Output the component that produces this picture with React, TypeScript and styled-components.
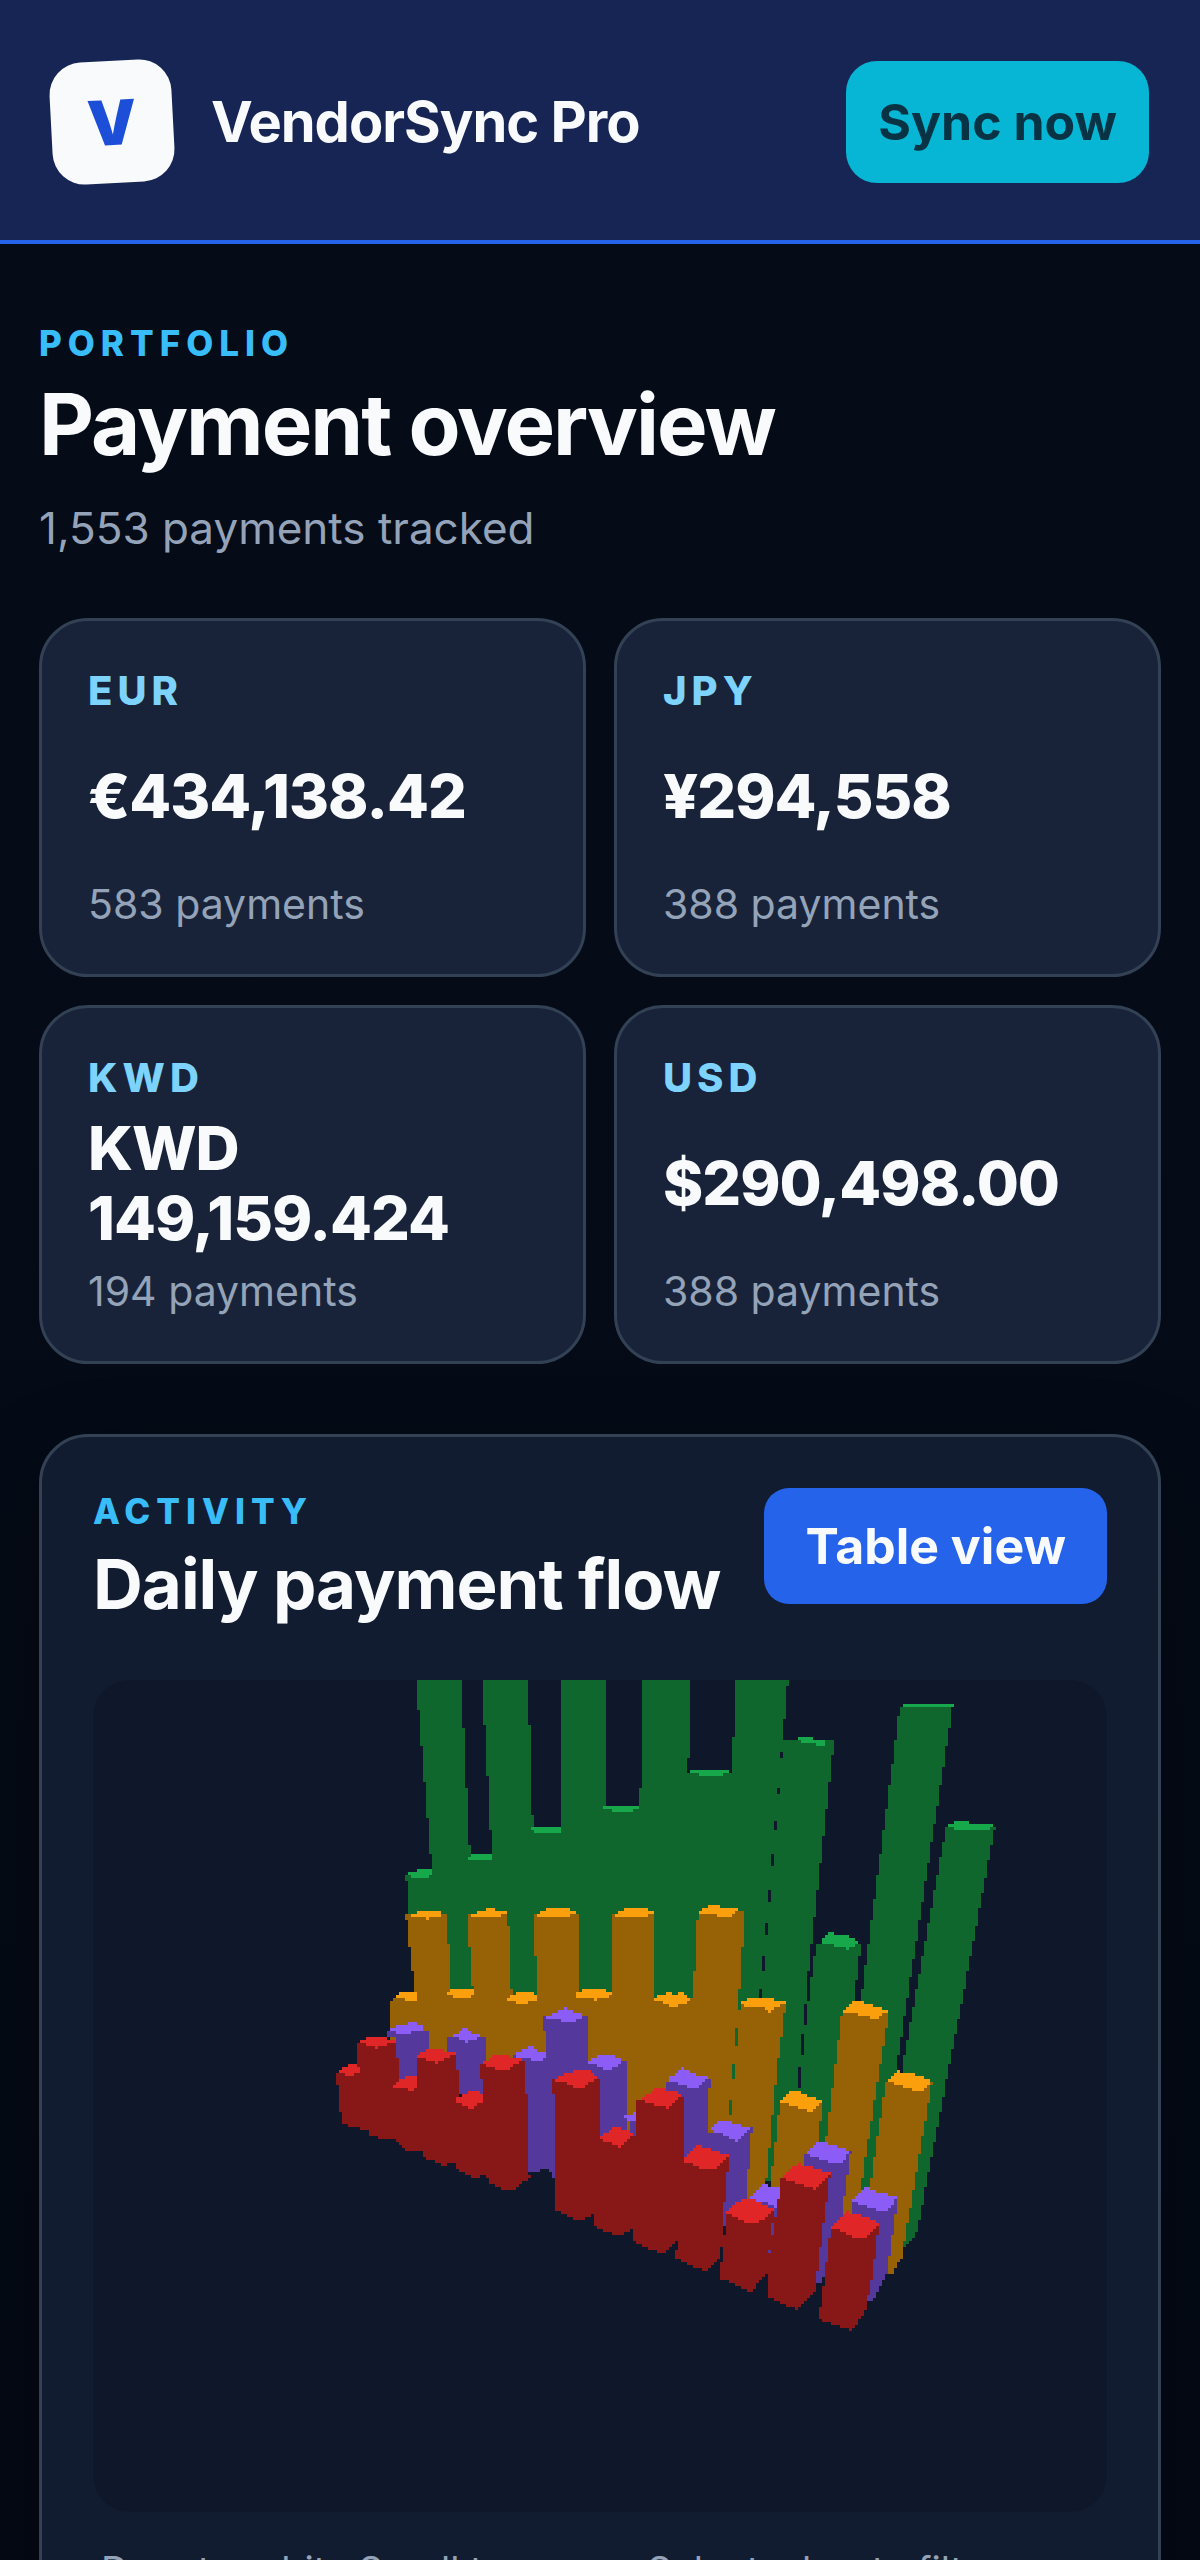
import React, { useMemo } from 'react';
import styled, { createGlobalStyle } from 'styled-components';

/** Types */
interface ICurrencyTotal {
	code: string;
	amount: string;
	payments: number;
}

interface IBarSeries {
	id: string;
	side: string;
	top: string;
	sides: string[];
	caps: string[];
}

/** Data */
const totals: ICurrencyTotal[] = [
	{ code: 'EUR', amount: '€434,138.42', payments: 583 },
	{ code: 'JPY', amount: '¥294,558', payments: 388 },
	{ code: 'KWD', amount: 'KWD 149,159.424', payments: 194 },
	{ code: 'USD', amount: '$290,498.00', payments: 388 },
];

// projected bar faces, back row first
const series: IBarSeries[] = [
	{
		id: 'green',
		side: '#10672e',
		top: '#18a84c',
		sides: [
			'313,194 339,192 323,0 368,0 377,176 399,176 389,0 435,0 440,150 467,150 467,0 512,0 512,128 547,128 550,0 598,0 595,93 639,93 643,0 695,0 656,440 323,340',
			'690,61 741,61 716,287 704,412 690,500 650,500 658,440',
			'723,264 768,264 761,320 729,480 700,480 706,412 713,340',
			'807,26 860,25 811,340 803,390 780,520 742,520 768,320',
			'853,147 902,147 873,300 825,547 822,555 811,569 790,560 809,390 818,340',
		],
		caps: [
			'313,195 326,189 339,189 339,195 330,199',
			'374,178 379,173 399,173 399,179 374,180',
			'438,148 467,148 467,152 456,154 447,154 438,151',
			'511,125 547,125 547,128 534,132 524,132 511,129',
			'597,90 637,90 637,93 623,96 614,96 597,93',
			'703,58 719,58 733,62 733,65 710,64',
			'726,262 737,253 758,257 767,262 754,269 743,266',
			'809,23 860,23 860,27 809,27',
			'853,146 862,142 876,142 880,145 902,145 895,151 868,151',
		],
	},
	{
		id: 'amber',
		side: '#976106',
		top: '#fba00c',
		sides: [
			'297,320 322,314 313,235 354,235 358,314 380,314 374,235 415,235 419,318 444,318 441,235 485,235 486,316 518,316 518,235 562,235 560,318 600,318 605,232 652,232 646,316 631,500 297,365',
			'647,324 693,323 684,388 671,525 650,525 632,500',
			'687,423 729,421 726,460 715,520 675,520 678,500',
			'749,332 796,331 779,437 768,507 758,550 715,550 733,460',
			'793,401 839,402 814,547 809,577 800,593 792,593 760,590 777,507',
		],
		caps: [
			'313,238 326,231 347,231 350,235 340,237 333,240 330,237',
			'378,235 388,231 395,228 400,228 405,231 416,231 411,234 402,237 379,237',
			'441,235 452,230 457,227 473,227 480,232 485,232 473,237 454,237',
			'518,235 530,230 536,227 553,227 558,232 562,232 550,237 533,237',
			'605,234 611,228 624,224 631,228 648,227 643,233 635,237 626,237 620,234',
			'298,319 308,312 323,311 323,320',
			'354,311 366,308 380,308 380,315 369,320 354,315',
			'412,319 424,313 435,311 444,315 444,319 435,323 425,323',
			'479,316 490,309 506,308 518,312 518,316 503,320',
			'559,318 572,314 576,310 581,314 590,313 598,319 592,323 584,326 576,326',
			'645,325 656,318 679,318 684,321 694,322 684,327 676,332 672,328',
			'687,422 697,412 701,410 712,415 729,421 717,432',
			'749,331 760,321 771,321 773,324 796,330 786,336 782,340 773,336',
			'793,401 806,391 824,395 840,402 828,413',
		],
	},
	{
		id: 'violet',
		side: '#54389b',
		top: '#8b5cf6',
		sides: [
			'294,351 335,351 335,400 306,400 303,356 294,356',
			'353,356 393,356 393,415 357,415',
			'419,375 454,375 454,487 444,493 432,490',
			'451,337 495,337 495,500 463,500 453,487 453,350 451,350',
			'493,382 533,381 533,460 497,460',
			'538,439 560,439 560,460 538,460',
			'573,401 617,399 613,470 605,500 578,500',
			'614,452 659,448 652,530 634,548 610,520',
			'655,518 690,512 676,583 672,583 660,540',
			'710,474 758,471 745,560 729,602 722,602 712,490',
			'758,521 805,518 794,593 779,622 774,622 758,530',
		],
		caps: [
			'296,350 308,345 316,343 324,343 332,349 320,352 312,356 304,353',
			'353,358 364,353 372,347 380,353 392,353 384,358 374,362 366,358',
			'419,376 430,370 438,366 446,371 454,373 454,377 446,381 430,378',
			'452,338 464,333 473,327 484,334 494,335 484,340 473,343 464,339',
			'493,383 503,377 512,375 520,376 531,381 523,386 514,391 505,386',
			'531,437 538,434 544,429 544,441 535,441',
			'573,400 584,392 590,388 600,394 617,398 607,405 600,410 590,405',
			'616,450 626,440 635,440 645,445 659,447 650,455 643,462 633,456',
			'655,518 663,510 672,503 678,507 687,508 684,528 676,524',
			'711,474 722,465 728,461 738,465 758,471 747,484 735,482',
			'758,521 768,511 774,507 785,512 805,517 794,532 782,529',
		],
	},
	{
		id: 'red',
		side: '#871817',
		top: '#e02626',
		sides: [
			'243,393 265,386 265,363 303,361 307,403 325,403 323,377 363,375 367,418 390,418 387,383 431,381 434,420 434,493 438,497 417,512 397,503 393,493 385,499 364,490 361,481 353,486 332,478 329,470 313,471 304,463 301,458 294,461 276,454 274,449 261,448 249,443 246,420',
			'460,400 508,398 508,457 543,457 543,420 591,416 591,480 636,477 630,537 628,577 613,592 583,578 584,561 571,573 566,573 541,562 541,546 528,557 502,547 501,532 489,542 463,530 463,417 460,415',
			'634,533 681,530 674,593 658,612 627,598 629,577',
			'688,497 737,494 722,610 704,630 674,617 675,580 684,530',
			'738,548 786,544 780,590 773,630 760,650 756,650 726,639',
		],
		caps: [
			'244,393 251,387 262,382 264,386 268,386 268,391 258,397 248,392',
			'265,363 275,357 280,356 292,356 296,359 303,361 292,365 284,368 274,365',
			'297,406 306,401 312,398 318,394 320,397 325,397 325,408 318,410 311,408',
			'323,377 332,371 340,369 350,369 355,373 363,373 355,378 343,383 333,379',
			'361,420 370,414 377,411 385,411 389,415 389,422 378,429 368,424',
			'388,384 396,379 403,375 415,375 420,378 430,380 422,384 414,390 405,390',
			'461,400 472,394 480,391 496,391 505,398 495,404 487,409 478,405',
			'505,459 514,452 523,446 533,450 543,453 534,461 527,467 517,463',
			'545,420 555,414 564,407 574,410 591,414 582,422 574,428 560,424',
			'588,480 598,471 605,465 617,469 636,475 627,484 620,490 612,490',
			'633,533 642,524 650,519 660,519 681,529 672,538 664,544 655,544',
			'688,498 698,489 706,484 718,487 737,493 728,503 722,509 712,506',
			'738,547 746,538 754,532 765,534 786,543 778,553 772,560 762,558',
		],
	},
];

const CELL = 3;

// fill a polygon with square cells, one run per scan line
const toCells = (points: string) => {
	const pts = points.split(' ').map(p => p.split(',').map(Number));
	const ys = pts.map(p => p[1]);
	const first = Math.floor(Math.min(...ys) / CELL);
	const last = Math.ceil(Math.max(...ys) / CELL);
	let d = '';

	for (let row = first; row < last; row++) {
		const y = (row + 0.5) * CELL;
		const hits: number[] = [];
		pts.forEach(([x1, y1], i) => {
			const [x2, y2] = pts[(i + 1) % pts.length];
			if (y1 <= y !== y2 <= y) {
				hits.push(x1 + ((y - y1) * (x2 - x1)) / (y2 - y1));
			}
		});
		hits.sort((a, b) => a - b);

		for (let i = 0; i + 1 < hits.length; i += 2) {
			const from = Math.round(hits[i] / CELL) * CELL;
			const to = Math.round(hits[i + 1] / CELL) * CELL;
			if (to > from) d += `M${from} ${row * CELL}h${to - from}v${CELL}h${from - to}z`;
		}
	}
	return d;
};

/** style */
const GlobalStyle = createGlobalStyle`
	* {
		box-sizing: border-box;
	}
	body {
		margin: 0;
		background: #050c18;
		color: #f8fafc;
		font-family: Inter, 'Liberation Sans', sans-serif;
	}
	h1, h2, p {
		margin: 0;
	}
	button {
		border: 0;
		font-family: inherit;
		cursor: pointer;
	}
`;

const Header = styled.header`
	display: flex;
	align-items: center;
	justify-content: space-between;
	padding: 61px 51px 57px;
	background: #172554;
	border-bottom: 4px solid #2563eb;
`;

const Brand = styled.div`
	display: flex;
	align-items: center;
	gap: 38px;
`;

const LogoTile = styled.span`
	display: grid;
	place-items: center;
	width: 122px;
	height: 122px;
	border-radius: 32px;
	background: #f8fafc;
	color: #1d4ed8;
	font-size: 62px;
	font-weight: 900;
	transform: rotate(-3deg);
`;

const BrandName = styled.span`
	font-size: 56px;
	font-weight: 700;
	letter-spacing: -1px;
`;

const Button = styled.button<{ $tone: 'cyan' | 'blue' }>`
	flex: none;
	height: ${p => (p.$tone === 'cyan' ? 122 : 116)}px;
	padding: 0 ${p => (p.$tone === 'cyan' ? 32 : 41)}px;
	border-radius: ${p => (p.$tone === 'cyan' ? 31 : 25)}px;
	background: ${p => (p.$tone === 'cyan' ? '#06b6d4' : '#2563eb')};
	color: ${p => (p.$tone === 'cyan' ? '#083344' : '#f8fafc')};
	font-size: 50px;
	font-weight: 700;
`;

const Main = styled.main`
	padding: 76px 39px 40px;
	background: linear-gradient(#050c18, #040914);
`;

const Eyebrow = styled.p`
	color: #38bdf8;
	font-size: 35px;
	font-weight: 800;
	line-height: 46px;
	letter-spacing: 6px;
`;

const Title = styled.h1`
	font-size: 85px;
	font-weight: 700;
	line-height: 118px;
	letter-spacing: -2px;
`;

const Subtitle = styled.p`
	margin-top: 12px;
	color: #94a3b8;
	font-size: 44px;
	line-height: 64px;
`;

const TotalsGrid = styled.section`
	display: grid;
	grid-template-columns: 1fr 1fr;
	gap: 28px;
	margin-top: 58px;
`;

const TotalCard = styled.article`
	display: flex;
	flex-direction: column;
	justify-content: space-between;
	min-height: 359px;
	padding: 48px 46px 44px;
	border: 3px solid #334155;
	border-radius: 49px;
	background: #18233a;
`;

const CurrencyCode = styled.span`
	color: #7dd3fc;
	font-size: 40px;
	font-weight: 800;
	line-height: 44px;
	letter-spacing: 5px;
`;

const Amount = styled.strong`
	font-size: 61px;
	font-weight: 800;
	line-height: 70px;
	letter-spacing: -1px;
`;

const PaymentCount = styled.span`
	color: #94a3b8;
	font-size: 41px;
	line-height: 52px;
`;

const Panel = styled.section`
	margin-top: 70px;
	padding: 51px;
	border: 3px solid #334155;
	border-radius: 49px;
	background: #111c30;
	box-shadow: 0 36px 90px rgba(0, 0, 0, 0.3);
`;

const PanelHead = styled.div`
	display: flex;
	align-items: flex-start;
	justify-content: space-between;
	gap: 24px;
`;

const PanelTitle = styled.h2`
	font-size: 69px;
	font-weight: 700;
	line-height: 100px;
	letter-spacing: -1px;
	white-space: nowrap;
`;

const ChartFrame = styled.div`
	margin-top: 46px;
	overflow: hidden;
	border-radius: 37px;
	background: #0f172a;

	svg {
		display: block;
		width: 100%;
		height: auto;
	}
`;

const Hint = styled.p`
	margin-top: 30px;
	padding: 0 8px;
	color: #94a3b8;
	font-size: 38px;
	line-height: 56px;
`;

/** Component: 3D bar chart */
const FlowChart: React.FC = () => {
	const layers = useMemo(
		() =>
			series.map(item => ({
				...item,
				sidePath: item.sides.map(toCells).join(''),
				capPath: item.caps.map(toCells).join(''),
			})),
		[],
	);

	return (
		<ChartFrame>
			<svg viewBox='0 0 1014 832' shapeRendering='crispEdges' role='img' aria-label='Daily payment flow'>
				{layers.map(layer => (
					<g key={layer.id}>
						<path d={layer.sidePath} fill={layer.side} />
						<path d={layer.capPath} fill={layer.top} />
					</g>
				))}
			</svg>
		</ChartFrame>
	);
};

/** Component: payment overview page */
const App: React.FC = () => (
	<>
		<GlobalStyle />
		<Header>
			<Brand>
				<LogoTile>V</LogoTile>
				<BrandName>VendorSync Pro</BrandName>
			</Brand>
			<Button type='button' $tone='cyan'>
				Sync now
			</Button>
		</Header>
		<Main>
			<Eyebrow>PORTFOLIO</Eyebrow>
			<Title>Payment overview</Title>
			<Subtitle>1,553 payments tracked</Subtitle>

			<TotalsGrid>
				{totals.map(total => (
					<TotalCard key={total.code}>
						<CurrencyCode>{total.code}</CurrencyCode>
						<Amount>{total.amount}</Amount>
						<PaymentCount>{total.payments} payments</PaymentCount>
					</TotalCard>
				))}
			</TotalsGrid>

			<Panel>
				<PanelHead>
					<div>
						<Eyebrow>ACTIVITY</Eyebrow>
						<PanelTitle>Daily payment flow</PanelTitle>
					</div>
					<Button type='button' $tone='blue'>
						Table view
					</Button>
				</PanelHead>
				<FlowChart />
				<Hint>Drag to orbit · Scroll to zoom · Select a bar to filter</Hint>
			</Panel>
		</Main>
	</>
);

export default App;
